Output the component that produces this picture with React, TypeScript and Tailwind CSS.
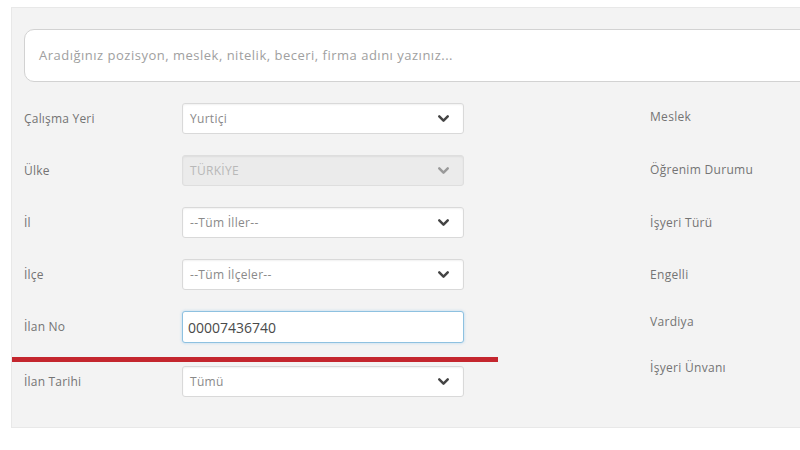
import { ChevronDown } from 'lucide-react';

const LEFT_ROWS = [
  { label: 'Çalışma Yeri', value: 'Yurtiçi' },
  { label: 'Ülke', value: 'TÜRKİYE', disabled: true },
  { label: 'İl', value: '--Tüm İller--' },
  { label: 'İlçe', value: '--Tüm İlçeler--' },
];

const RIGHT_LABELS = [
  { label: 'Meslek', mt: 'mt-[27px]' },
  { label: 'Öğrenim Durumu', mt: 'mt-[37px]' },
  { label: 'İşyeri Türü', mt: 'mt-[37px]' },
  { label: 'Engelli', mt: 'mt-[36px]' },
  { label: 'Vardiya', mt: 'mt-[31px]' },
  { label: 'İşyeri Ünvanı', mt: 'mt-[30px]' },
];

function Select({ value, disabled }: { value: string; disabled?: boolean }) {
  return (
    <div
      className={`w-[282px] h-[31px] rounded-[3px] border flex items-center justify-between pl-[7px] pr-[11px] shadow-[inset_0_1px_2px_rgba(0,0,0,0.06)] ${
        disabled ? 'bg-[#ebebeb] border-[#dedede] text-[#b8b8b8]' : 'bg-white border-[#d9d9d9] text-[#8a8a8a]'
      }`}
    >
      <span className="text-[12px] tracking-[0.3px]">{value}</span>
      <ChevronDown className={`w-[17px] h-[17px] ${disabled ? 'text-[#9a9a9a]' : 'text-[#444]'}`} strokeWidth={3.5} />
    </div>
  );
}

function Row({ label, children }: { label: string; children: React.ReactNode }) {
  return (
    <div className="flex items-center">
      <div className="w-[158px] text-[12px] tracking-[0.2px] text-[#747474]">{label}</div>
      {children}
    </div>
  );
}

export default function App() {
  return (
    <div className="w-[800px] h-[450px] bg-white overflow-hidden" style={{ fontFamily: '"Open Sans", "DejaVu Sans", sans-serif' }}>
      <div className="ml-[11px] mt-[7px] w-[820px] h-[421px] bg-[#f3f3f3] border border-[#e8e8e8] pl-[12px] pt-[21px]">
        <div className="h-[53px] bg-white border border-[#d2d2d2] rounded-[10px] flex items-center pl-[14px]">
          <span className="text-[13px] tracking-[0.5px] text-[#a0a0a0]">Aradığınız pozisyon, meslek, nitelik, beceri, firma adını yazınız...</span>
        </div>

        <div className="flex">
          <div className="flex flex-col pt-[21px]">
            <div className="flex flex-col gap-[21px]">
              {LEFT_ROWS.map(r => (
                <Row key={r.label} label={r.label}>
                  <Select value={r.value} disabled={r.disabled} />
                </Row>
              ))}
              <Row label="İlan No">
                <div className="w-[282px] h-[32px] rounded-[3px] bg-white border border-[#8ec1e0] shadow-[0_0_3px_rgba(102,175,233,0.45)] flex items-center pl-[5px]">
                  <span className="text-[14px] text-[#4a4a4a]">00007436740</span>
                </div>
              </Row>
            </div>
            <div className="-ml-[12px] w-[486px] h-[5px] bg-[#c4262e] mt-[14px] mb-[4px]" />
            <Row label="İlan Tarihi">
              <Select value="Tümü" />
            </Row>
          </div>

          <div className="ml-[152px] flex flex-col">
            {RIGHT_LABELS.map(r => (
              <div key={r.label} className={`${r.mt} text-[12px] tracking-[0.3px] text-[#747474] leading-[16px]`}>{r.label}</div>
            ))}
          </div>
        </div>
      </div>
    </div>
  );
}
